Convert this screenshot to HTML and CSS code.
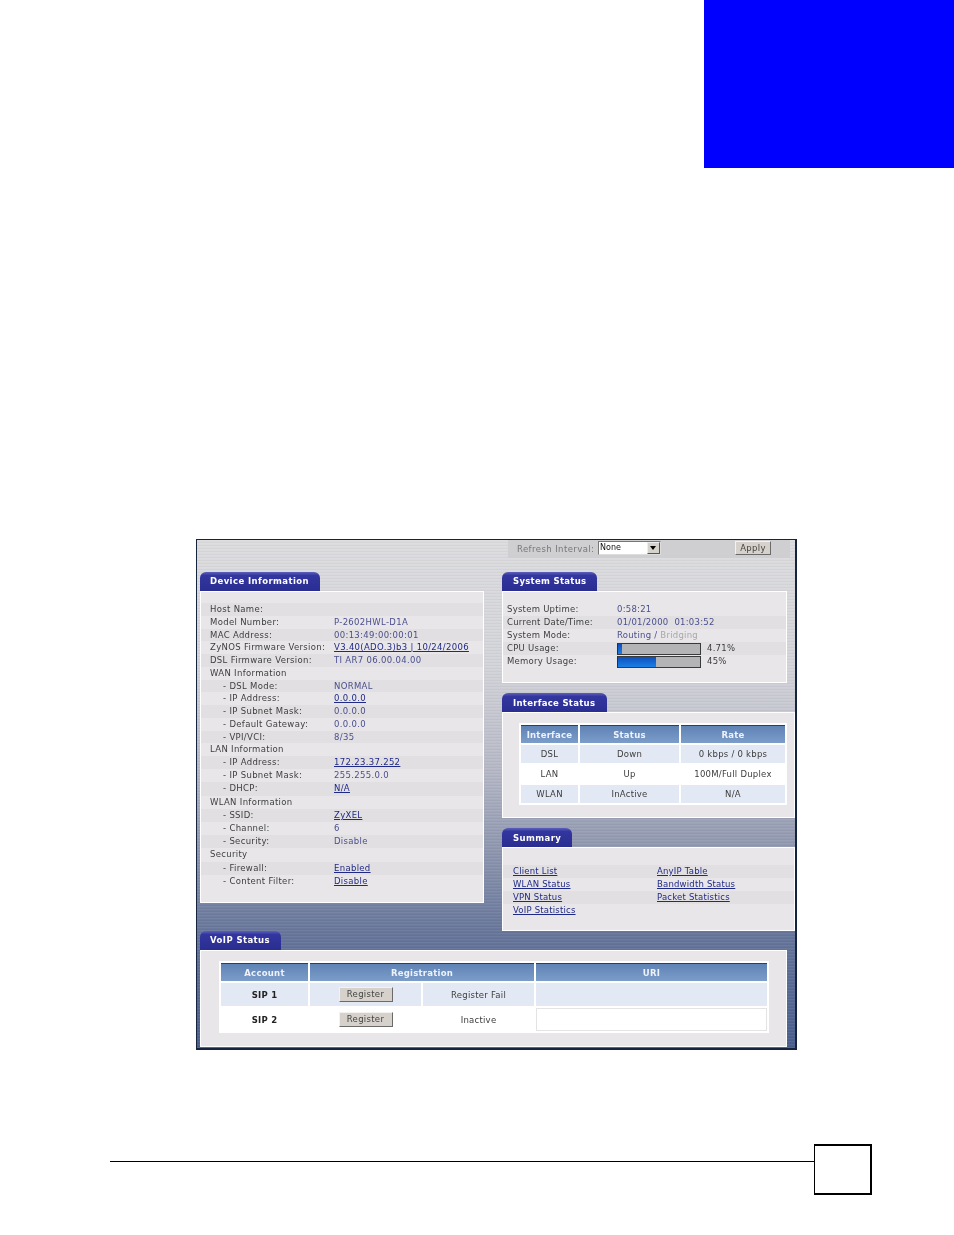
FILE: index.html
```html
<!DOCTYPE html>
<html lang="en">
<head>
<meta charset="utf-8">
<title>Status screen</title>
<link rel="stylesheet" href="styles.css">
</head>
<body>
<div class="chapter-tab"></div>
<main class="frame">
  <div class="topbar">
    <div class="refresh">
      <span class="refresh-label">Refresh Interval:</span>
      <div class="select"><span>None</span><i class="select-btn"></i></div>
      <button class="btn apply">Apply</button>
    </div>
  </div>
  <div class="columns">
    <section class="left">
      <h2 class="tab tab-device">Device Information</h2>
      <div class="panel panel-device">
        <div class="row"><span class="k">Host Name:</span><span class="v"></span></div>
        <div class="row"><span class="k">Model Number:</span><span class="v">P-2602HWL-D1A</span></div>
        <div class="row"><span class="k">MAC Address:</span><span class="v">00:13:49:00:00:01</span></div>
        <div class="row"><span class="k">ZyNOS Firmware Version:</span><a class="v" href="#">V3.40(ADO.3)b3 | 10/24/2006</a></div>
        <div class="row"><span class="k">DSL Firmware Version:</span><span class="v">TI AR7 06.00.04.00</span></div>
        <div class="row"><span class="k">WAN Information</span></div>
        <div class="row"><span class="k sub">- DSL Mode:</span><span class="v">NORMAL</span></div>
        <div class="row"><span class="k sub">- IP Address:</span><a class="v" href="#">0.0.0.0</a></div>
        <div class="row"><span class="k sub">- IP Subnet Mask:</span><span class="v">0.0.0.0</span></div>
        <div class="row"><span class="k sub">- Default Gateway:</span><span class="v">0.0.0.0</span></div>
        <div class="row"><span class="k sub">- VPI/VCI:</span><span class="v">8/35</span></div>
        <div class="row"><span class="k">LAN Information</span></div>
        <div class="row"><span class="k sub">- IP Address:</span><a class="v" href="#">172.23.37.252</a></div>
        <div class="row"><span class="k sub">- IP Subnet Mask:</span><span class="v">255.255.0.0</span></div>
        <div class="row"><span class="k sub">- DHCP:</span><a class="v" href="#">N/A</a></div>
        <div class="row"><span class="k">WLAN Information</span></div>
        <div class="row"><span class="k sub">- SSID:</span><a class="v" href="#">ZyXEL</a></div>
        <div class="row"><span class="k sub">- Channel:</span><span class="v">6</span></div>
        <div class="row"><span class="k sub">- Security:</span><span class="v">Disable</span></div>
        <div class="row"><span class="k">Security</span></div>
        <div class="row"><span class="k sub">- Firewall:</span><a class="v" href="#">Enabled</a></div>
        <div class="row"><span class="k sub">- Content Filter:</span><a class="v" href="#">Disable</a></div>
      </div>
    </section>
    <section class="right">
      <h2 class="tab tab-system">System Status</h2>
      <div class="panel panel-system">
        <div class="row"><span class="k">System Uptime:</span><span class="v">0:58:21</span></div>
        <div class="row"><span class="k">Current Date/Time:</span><span class="v">01/01/2000&nbsp; 01:03:52</span></div>
        <div class="row"><span class="k">System Mode:</span><span class="v">Routing / <span class="muted">Bridging</span></span></div>
        <div class="row"><span class="k">CPU Usage:</span><span class="bar"><span class="fill" style="width:4px"></span></span><span class="pct">4.71%</span></div>
        <div class="row"><span class="k">Memory Usage:</span><span class="bar"><span class="fill" style="width:38px"></span></span><span class="pct">45%</span></div>
      </div>
      <h2 class="tab tab-interface">Interface Status</h2>
      <div class="panel panel-interface">
        <table class="grid if-grid">
          <colgroup><col class="c1"><col class="c2"><col class="c3"></colgroup>
          <tr><th>Interface</th><th>Status</th><th>Rate</th></tr>
          <tr class="tint"><td>DSL</td><td>Down</td><td>0 kbps / 0 kbps</td></tr>
          <tr><td>LAN</td><td>Up</td><td>100M/Full Duplex</td></tr>
          <tr class="tint"><td>WLAN</td><td>InActive</td><td>N/A</td></tr>
        </table>
      </div>
      <h2 class="tab tab-summary">Summary</h2>
      <div class="panel panel-summary">
        <div class="row"><a class="s1" href="#">Client List</a><a href="#">AnyIP Table</a></div>
        <div class="row"><a class="s1" href="#">WLAN Status</a><a href="#">Bandwidth Status</a></div>
        <div class="row"><a class="s1" href="#">VPN Status</a><a href="#">Packet Statistics</a></div>
        <div class="row"><a class="s1" href="#">VoIP Statistics</a></div>
      </div>
    </section>
  </div>
  <section class="voip">
    <h2 class="tab tab-voip">VoIP Status</h2>
    <div class="panel panel-voip">
      <table class="grid voip-grid">
        <colgroup><col class="v1"><col class="v2"><col class="v3"><col class="v4"></colgroup>
        <tr><th>Account</th><th colspan="2">Registration</th><th>URI</th></tr>
        <tr class="tint"><td class="sip">SIP 1</td><td><button class="btn reg">Register</button></td><td>Register Fail</td><td></td></tr>
        <tr><td class="sip">SIP 2</td><td><button class="btn reg">Register</button></td><td>Inactive</td><td class="uri"></td></tr>
      </table>
    </div>
  </section>
</main>
<footer class="footer">
  <div class="rule"></div>
  <div class="pagebox"></div>
</footer>
</body>
</html>
```
FILE: styles.css
```css
* { box-sizing: border-box; }
html, body { margin: 0; padding: 0; background: #fff; }
body { font-family: "DejaVu Sans", Verdana, sans-serif; font-size: 8.5px; color: #3c3c3c; }

.chapter-tab { width: 250px; height: 168px; margin-left: auto; background: #0000ff; }

.frame {
  width: 601px; height: 511px; margin: 371px 0 0 196px;
  border: solid #16233f; border-width: 1px 2px 2px 1px;
  background:
    repeating-linear-gradient(180deg, rgba(255,255,255,.05) 0 1px, rgba(255,255,255,0) 1px 2px, rgba(0,0,0,.03) 2px 3px),
    linear-gradient(180deg, #dcdcdf 0%, #d3d4d9 25%, #b6b8c6 45%, #8c95ae 62%, #66759a 78%, #4a5f8e 100%);
  filter: blur(.4px);
}

.topbar { height: 32px; padding-left: 311px; }
.refresh { display: flex; align-items: flex-start; width: 282px; height: 18px; padding: 1px 0 0 9px; background: #cfcfd1; }
.refresh-label { width: 81px; line-height: 16px; color: #777; white-space: nowrap; letter-spacing: .42px; }
.select {
  display: flex; justify-content: space-between; width: 63px; height: 14px;
  background: #fff; border: 1px solid; border-color: #777 #ddd #ddd #777;
  font: 8px/11px "DejaVu Sans", sans-serif; color: #111; padding-left: 1px;
}
.select-btn {
  position: relative; display: block; width: 13px; height: 12px;
  background: #d6d3cd; border: 1px solid; border-color: #eee #555 #555 #eee;
}
.select-btn::after {
  content: ""; position: absolute; left: 2px; top: 3px;
  border: 3px solid transparent; border-top: 4px solid #000; border-bottom: 0;
}
.btn {
  font: 8.5px "DejaVu Sans", sans-serif; color: #444; padding: 0;
  background: #d6d2cb; border: 1px solid; border-color: #f4f2ee #6a6a6a #6a6a6a #f4f2ee;
  letter-spacing: .3px;
}
.apply { width: 36px; height: 14px; margin-left: 74px; line-height: 12px; }

.columns { display: flex; height: 359px; padding-left: 3px; }
.left { width: 302px; }
.right { width: 293px; }

.tab {
  display: flex; align-items: center; height: 19px; margin: 0; padding: 0 0 1px 10px;
  font-size: 8.5px; font-weight: bold; color: #fff; letter-spacing: .42px; white-space: nowrap;
  background: linear-gradient(180deg, #5d60bb 0, #33369f 18%, #2a2d90 100%);
  border-radius: 6px 6px 0 0;
}
.tab-device { width: 120px; }
.tab-system { width: 95px; padding-left: 11px; letter-spacing: .3px; }
.tab-interface { width: 105px; padding: 0 0 0 11px; letter-spacing: .3px; }
.tab-summary { width: 70px; padding: 0 0 0 11px; }
.tab-voip { width: 81px; }

.panel { background: #e8e6e9; border: 1px solid #fff; }
.row { display: flex; height: 13px; line-height: 13px; white-space: nowrap; letter-spacing: .32px; }
.k { color: #3e3e3e; }
.sub { padding-left: 13px; }
.v { color: #4a4f8c; }
a, a.v { color: #1f2a86; text-decoration: underline; }
.muted { color: #a8a8a8; }

.panel-device { width: 284px; height: 312px; padding-top: 11px; }
.panel-device .row { padding-left: 9px; }
.panel-device .row:nth-child(-n+12) { height: 12.75px; }
.panel-device .row:nth-child(n+13) { height: 13.2px; }
.panel-device .k { width: 124px; }
.panel-device .row:nth-child(odd) { background: #e1dfe2; }

.panel-system { width: 285px; height: 92px; padding-top: 11px; margin-bottom: 10px; }
.panel-system .row { padding-left: 4px; letter-spacing: .25px; }
.panel-system .k { width: 110px; }
.panel-system .row:nth-child(even) { background: #e1dfe2; }
.bar { display: block; width: 84px; height: 12px; margin-top: 1px; background: #b4b4b6; border: 1px solid #3a3a3a; border-left-color: #16306e; }
.fill { display: block; height: 100%; background: linear-gradient(180deg, #0f4fb8, #1a7fe8); }
.pct { margin-left: 6px; }

.panel-interface { width: 293px; height: 106px; padding: 10px 0 0 16px; margin-bottom: 10px; }
.grid { border-collapse: separate; border-spacing: 2px; background: #fff; table-layout: fixed; text-align: center; letter-spacing: .25px; }
.grid th {
  height: 18px; padding: 0; color: #eef2fa; font-weight: bold; font-size: 8.5px;
  background: linear-gradient(180deg, #5f83b5, #7c9dca); border-top: 1px solid #2a3f66;
}
.grid td { padding: 0; color: #3c3c3c; }
.tint td { background: #e3e9f4; }
.if-grid { width: 268px; }
.if-grid td { height: 18px; }
.c1 { width: 57px; }
.c2 { width: 99px; }
.c3 { width: 104px; }

.panel-summary { width: 293px; height: 84px; padding-top: 17px; }
.panel-summary .row { padding-left: 10px; letter-spacing: .2px; }
.panel-summary .row:nth-child(odd) { background: #e1dfe2; }
.s1 { width: 144px; }
.panel-summary a { display: block; height: 12px; }

.voip { padding-left: 3px; }
.panel-voip { width: 587px; height: 97px; padding: 10px 0 0 18px; }
.voip-grid { width: 550px; }
.voip-grid td { height: 23px; }
.v1 { width: 87px; }
.v2 { width: 111px; }
.v3 { width: 111px; }
.v4 { width: 231px; }
.grid .sip { font-weight: bold; color: #222; }
.grid .uri { border: 1px solid #e3e3e6; }
.reg { display: block; width: 54px; height: 15px; margin: 0 auto; line-height: 13px; }

.footer { display: flex; align-items: flex-start; margin: 94px 0 0 110px; }
.rule { width: 704px; height: 1px; margin-top: 17px; background: #000; }
.pagebox { width: 58px; height: 51px; background: #fff; border: solid #000; border-width: 2px 2px 2px 1px; }
```
